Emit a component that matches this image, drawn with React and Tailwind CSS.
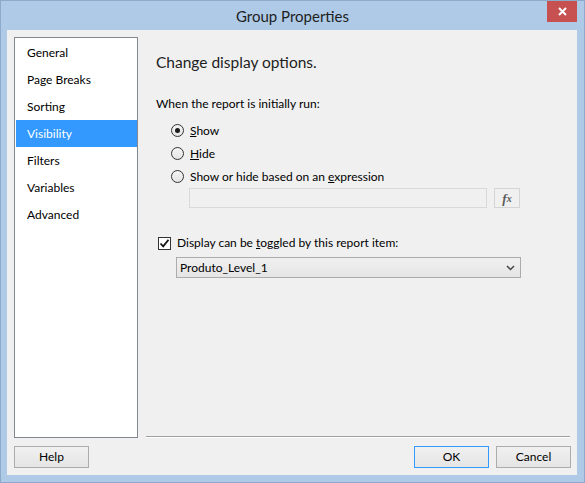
import React from "react";

const font = { fontFamily: 'Lato, "Segoe UI", "Noto Sans", sans-serif' };

function Radio({ checked }) {
  return (
    <span className="w-[13px] h-[13px] rounded-full border border-[#333333] bg-gradient-to-b from-[#f4f4f4] to-[#e4e4e4] flex items-center justify-center shrink-0">
      {checked && <span className="w-[5px] h-[5px] rounded-full bg-[#1a1a1a]" />}
    </span>
  );
}

function Button({ children, focused }) {
  return (
    <div
      className={`w-[75px] h-[22px] flex items-center justify-center text-[12px] text-black bg-gradient-to-b from-[#f0f0f0] to-[#e5e5e5] border ${
        focused ? "border-[#3399ff]" : "border-[#acacac]"
      }`}
    >
      {children}
    </div>
  );
}

export default function App() {
  const items = ["General", "Page Breaks", "Sorting", "Visibility", "Filters", "Variables", "Advanced"];
  return (
    <div className="w-[585px] h-[483px] bg-[#aecae6] border border-[#8eaacb] flex flex-col" style={font}>
      {/* title bar */}
      <div className="h-[29px] grid grid-cols-[1fr_auto_1fr] items-start">
        <div />
        <div className="text-[15px] leading-[20px] text-[#1e1e1e] mt-[5px]">Group Properties</div>
        <div className="flex justify-end pr-[7px]">
          <div className="w-[30px] h-[21px] bg-[#c75050] flex items-center justify-center">
            <svg width="9" height="9" viewBox="0 0 9 9">
              <path d="M1 1 L8 8 M8 1 L1 8" stroke="white" strokeWidth="2" />
            </svg>
          </div>
        </div>
      </div>
      {/* client */}
      <div className="ml-[6px] mr-[7px] h-[445px] bg-[#f0f0f0] flex flex-col">
        <div className="flex pt-[7px] pl-[7px]">
          <div className="w-[124px] h-[401px] bg-white border border-[#828790] pt-[1px] pl-[1px]">
            {items.map((it) => (
              <div
                key={it}
                className={`h-[27px] w-[121px] flex items-center pl-[11px] text-[12px] ${
                  it === "Visibility" ? "bg-[#3399ff] text-white" : "text-black"
                }`}
              >
                {it}
              </div>
            ))}
          </div>
          <div className="flex-1 ml-[8px] mr-[7px] flex flex-col h-[401px]">
            <div className="pl-[10px] flex flex-col">
              <div className="mt-[15px] text-[15.5px] leading-[20px] text-[#1e1e1e]">Change display options.</div>
              <div className="mt-[24px] text-[12px] leading-[16px] text-black">When the report is initially run:</div>
              <div className="mt-[7px] h-[23px] flex items-center ml-[15px] gap-[6px] text-[12px] text-black">
                <Radio checked />
                <span><u>S</u>how</span>
              </div>
              <div className="h-[23px] flex items-center ml-[15px] gap-[6px] text-[12px] text-black">
                <Radio />
                <span><u>H</u>ide</span>
              </div>
              <div className="h-[23px] flex items-center ml-[15px] gap-[6px] text-[12px] text-black">
                <Radio />
                <span>Show or hide based on an <u>e</u>xpression</span>
              </div>
              <div className="ml-[33px] flex gap-[7px]">
                <div className="w-[298px] h-[20px] border border-[#d9d9d9] bg-[#f0f0f0]" />
                <div className="w-[26px] h-[20px] border border-[#d5d5d5] bg-[#f0f0f0] flex items-center justify-center text-[#5a5a5a] italic" style={{ fontFamily: '"Liberation Serif", serif' }}>
                  <span className="text-[13px] font-bold leading-none">f</span>
                  <span className="text-[10px] font-bold leading-none mt-[2px]">x</span>
                </div>
              </div>
              <div className="mt-[27px] h-[16px] flex items-center ml-[2px] gap-[6px] text-[12px] text-black">
                <span className="w-[13px] h-[13px] border border-[#333333] bg-white flex items-center justify-center shrink-0">
                  <svg width="11" height="11" viewBox="0 0 11 11">
                    <path d="M1.5 5.5 L4.2 8.3 L9.5 1.8" stroke="#111" strokeWidth="1.8" fill="none" />
                  </svg>
                </span>
                <span>Display can be <u>t</u>oggled by this report item:</span>
              </div>
              <div className="mt-[6px] ml-[20px] w-[345px] h-[21px] border border-[#acacac] bg-gradient-to-b from-[#f0f0f0] to-[#e5e5e5] flex items-center justify-between pl-[3px] pr-[5px] text-[12px] text-black">
                <span>Produto_Level_1</span>
                <svg width="9" height="6" viewBox="0 0 9 6">
                  <path d="M1 1 L4.5 4.5 L8 1" stroke="#444" strokeWidth="1.5" fill="none" />
                </svg>
              </div>
            </div>
            <div className="mt-auto border-t border-[#a0a0a0] border-b border-b-white" />
          </div>
        </div>
        <div className="mt-[8px] flex items-center pl-[7px] pr-[6px]">
          <Button>Help</Button>
          <div className="flex-1" />
          <Button focused>OK</Button>
          <div className="w-[7px]" />
          <Button>Cancel</Button>
        </div>
      </div>
    </div>
  );
}
